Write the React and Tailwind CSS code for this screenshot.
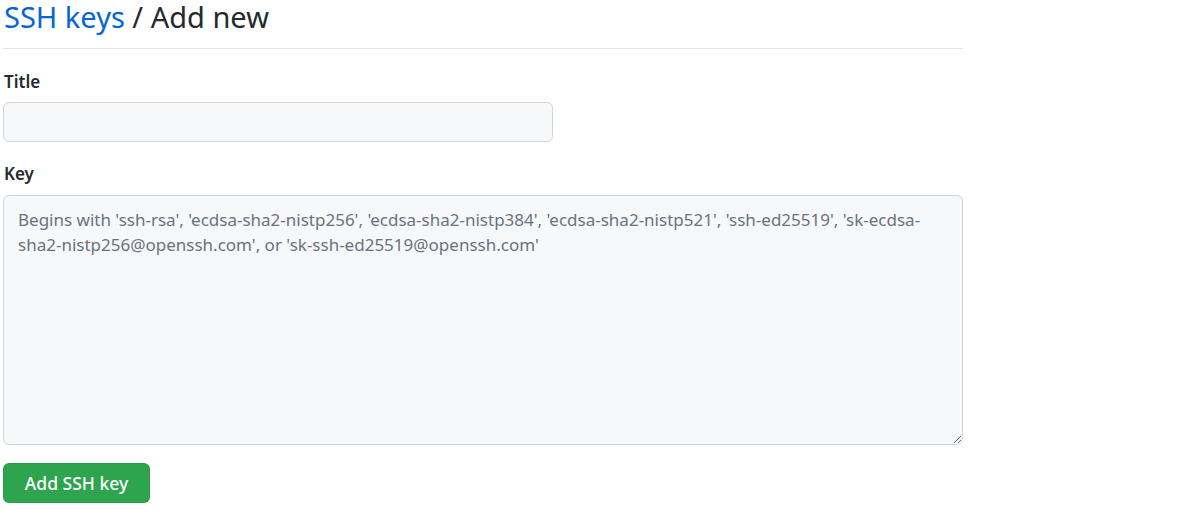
export default function App() {
  return (
    <div className="min-h-screen bg-white text-[#24292e]">
      <div className="ml-[3px] w-[960px] font-['Noto_Sans',sans-serif]">
        <div className="border-b border-[#e1e4e8] pb-[14px]">
          <h2 className="text-[29px] leading-[34px] font-normal pl-[1px]">
            <a className="text-[#0366d6]">SSH keys</a> / Add new
          </h2>
        </div>
        <form className="pt-[21px]">
          <label className="block text-[17px] leading-[24px] font-semibold pl-[1px]">Title</label>
          <input className="mt-[8px] block w-[550px] h-[40px] rounded-[6px] border border-[#d1d5da] bg-[#f6f8fa] px-[12px] outline-none" />
          <label className="mt-[20px] block text-[17px] leading-[24px] font-semibold pl-[1px]">Key</label>
          <textarea
            className="mt-[9px] block w-[960px] h-[250px] rounded-[6px] border border-[#d1d5da] bg-[#f6f8fa] pl-[14px] pr-[12px] pt-[11px] pb-[8px] text-[17px] leading-[25px] text-[#24292e] placeholder:text-[#6a737d] outline-none resize-y"
            placeholder="Begins with 'ssh-rsa', 'ecdsa-sha2-nistp256', 'ecdsa-sha2-nistp384', 'ecdsa-sha2-nistp521', 'ssh-ed25519', 'sk-ecdsa-sha2-nistp256@openssh.com', or 'sk-ssh-ed25519@openssh.com'"
          />
          <button type="button" className="mt-[18px] h-[40px] w-[147px] rounded-[6px] border border-[#22863a]/30 bg-[#2ea44f] text-white text-[17.5px] font-medium">
            Add SSH key
          </button>
        </form>
      </div>
    </div>
  );
}
